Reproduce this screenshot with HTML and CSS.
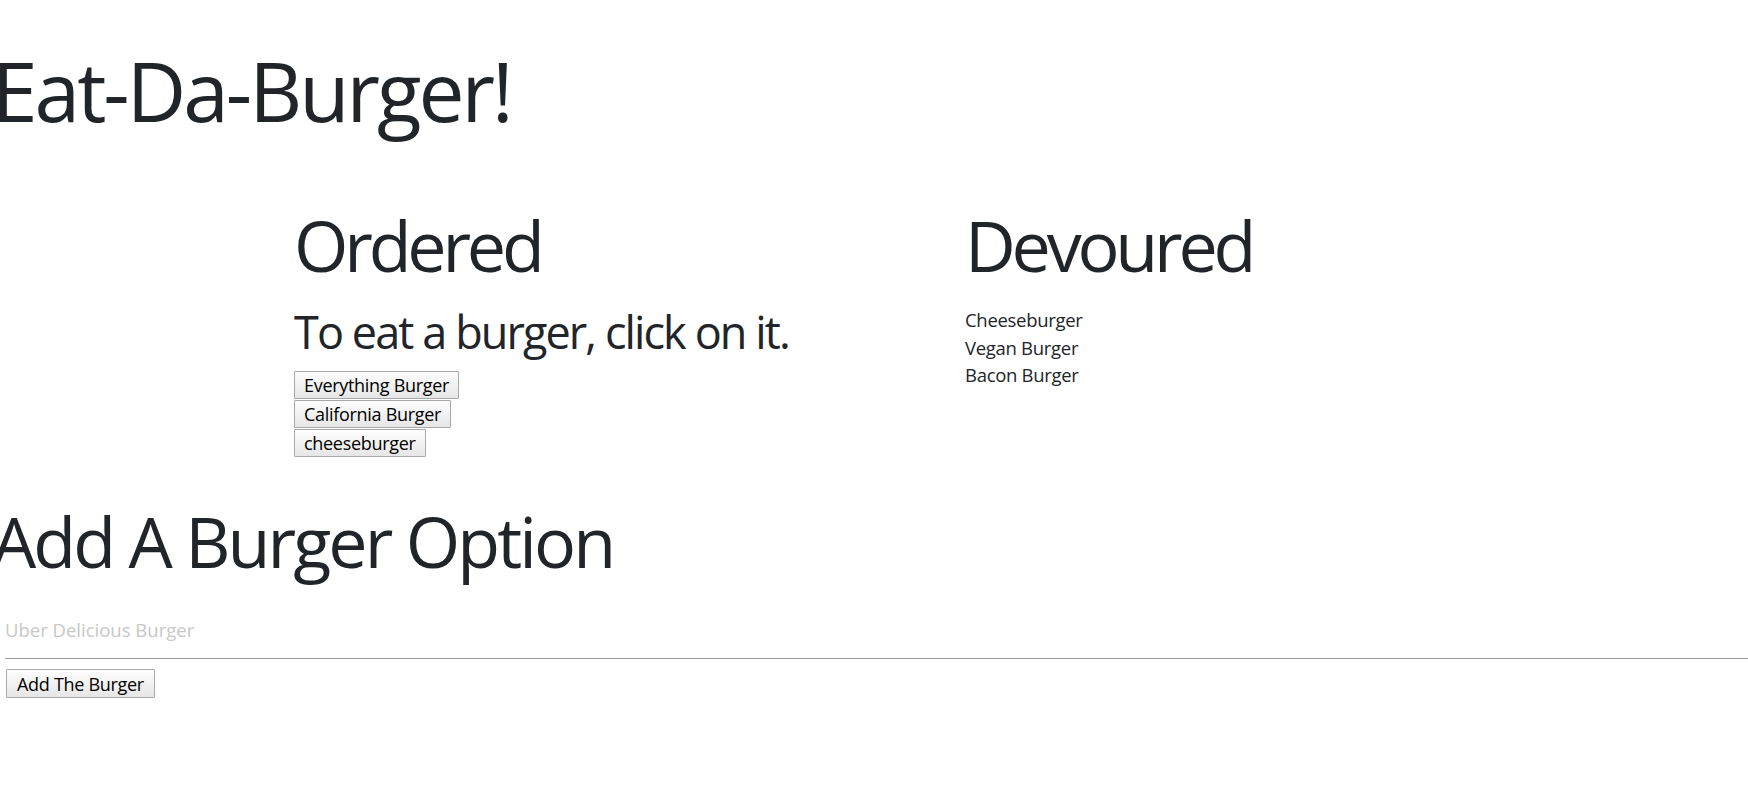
FILE: index.html
```html
<!DOCTYPE html>
<html lang="en">
<head>
<meta charset="utf-8">
<title>Eat-Da-Burger!</title>
<link rel="stylesheet" href="styles.css">
</head>
<body>
  <h1 class="title">Eat-Da-Burger!</h1>
  <div class="board">
    <section class="col col-ordered">
      <h2 class="col-head">Ordered</h2>
      <h3 class="hint">To eat a burger, click on it.</h3>
      <div class="burger-list">
        <button class="burger-btn" type="button">Everything Burger</button>
        <button class="burger-btn" type="button">California Burger</button>
        <button class="burger-btn" type="button">cheeseburger</button>
      </div>
    </section>
    <section class="col col-devoured">
      <h2 class="col-head">Devoured</h2>
      <ul class="eaten">
        <li>Cheeseburger</li>
        <li>Vegan Burger</li>
        <li>Bacon Burger</li>
      </ul>
    </section>
  </div>
  <h2 class="add-head">Add A Burger Option</h2>
  <form class="add-form">
    <input class="add-input" type="text" placeholder="Uber Delicious Burger">
    <button class="add-btn" type="button">Add The Burger</button>
  </form>
</body>
</html>
```
FILE: styles.css
```css
html, body {
  margin: 0;
  padding: 0;
  background: #ffffff;
}
body {
  font-family: "Open Sans", "Noto Sans", sans-serif;
  color: #212529;
}
.title {
  font-size: 82px;
  font-weight: 400;
  line-height: 1;
  margin: 49px 0 0 -8px;
  letter-spacing: -3px;
}
.board {
  display: grid;
  grid-template-columns: 671px 1fr;
  padding-left: 294px;
  margin-top: 79px;
}
.col-head {
  font-size: 70px;
  font-weight: 400;
  line-height: 1;
  margin: 0;
  letter-spacing: -4.2px;
}
.hint {
  font-size: 45px;
  font-weight: 400;
  line-height: 1;
  margin: 29px 0 0 0;
  letter-spacing: -1.9px;
}
.burger-list {
  display: flex;
  flex-direction: column;
  align-items: flex-start;
  gap: 1px;
  margin-top: 17px;
}
.burger-btn,
.add-btn {
  font-family: "Open Sans", "Noto Sans", sans-serif;
  font-size: 18px;
  letter-spacing: -0.3px;
  color: #000;
  background: linear-gradient(#fefefe, #e6e6e6);
  border: 1px solid #a8a8a8;
  border-radius: 1px;
  padding: 0 9px;
  height: 28px;
  line-height: 24px;
  cursor: pointer;
}
.eaten {
  list-style: none;
  margin: 26px 0 0 0;
  padding: 0;
  font-size: 18.5px;
  line-height: 27.5px;
  letter-spacing: -0.3px;
}
.add-head {
  font-size: 70px;
  font-weight: 400;
  line-height: 1;
  margin: 49px 0 0 -8px;
  letter-spacing: -2.9px;
}
.add-form {
  display: flex;
  flex-direction: column;
  align-items: flex-start;
  margin: 0;
}
.add-input {
  display: block;
  box-sizing: border-box;
  width: calc(100% - 5px);
  margin: 32px 0 0 5px;
  padding: 10px 0 16px 0;
  border: 0;
  border-bottom: 1px solid #9a9a9a;
  outline: none;
  font-family: "Open Sans", "Noto Sans", sans-serif;
  font-size: 18.5px;
  line-height: 24px;
  color: #212529;
  background: transparent;
}
.add-input::placeholder {
  color: #c8c8c8;
}
.add-btn {
  margin: 10px 0 0 6px;
  padding: 0 10px;
  height: 29px;
}
```
